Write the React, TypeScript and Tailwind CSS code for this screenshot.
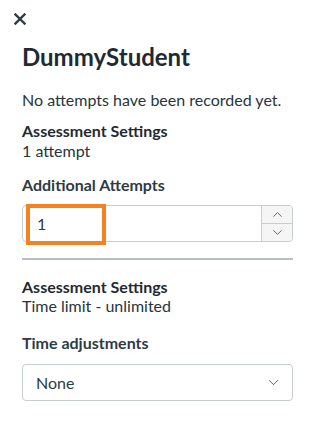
import { ChevronDown, ChevronUp } from "lucide-react";

export default function App() {
  return (
    <div
      className="w-[313px] h-[441px] bg-white text-[#2d3b45] overflow-hidden"
      style={{ fontFamily: "Lato, 'Noto Sans', sans-serif" }}
    >
      {/* Close */}
      <div className="pt-[13px] pl-[14px]">
        <svg width="12" height="12" viewBox="0 0 12 12" className="block">
          <path d="M1.5 1.5 L10.5 10.5 M10.5 1.5 L1.5 10.5" stroke="#2d3b45" strokeWidth="2.4" strokeLinecap="square" />
        </svg>
      </div>

      <div className="pl-[22px] pr-[20px]">
        <h1 className="mt-[17px] text-[24px] leading-[30px] font-bold text-[#1f2a33]">DummyStudent</h1>

        <p className="mt-[18px] text-[16px] leading-[20px] text-[#273540]">No attempts have been recorded yet.</p>

        <div className="mt-[11px] text-[16px] leading-[20px] text-[#273540]">
          <div className="font-bold text-[#1f2a33]">Assessment Settings</div>
          <div>1 attempt</div>
        </div>

        <label className="block mt-[14px] text-[16px] leading-[20px] font-bold">Additional Attempts</label>

        {/* Number input */}
        <div className="relative mt-[10px] flex h-[37px] border border-[#c7cdd1] rounded-[4px]">
          <div className="flex-1 flex items-center pl-[14px] text-[16px]">1</div>
          <div className="w-[31px] flex flex-col border-l border-[#c7cdd1] bg-[#f5f5f5] rounded-r-[4px]">
            <div className="flex-1 flex items-center justify-center border-b border-[#c7cdd1]">
              <ChevronUp size={15} strokeWidth={1.2} color="#2d3b45" />
            </div>
            <div className="flex-1 flex items-center justify-center">
              <ChevronDown size={15} strokeWidth={1.2} color="#2d3b45" />
            </div>
          </div>
          <div className="absolute left-[3px] top-[-2px] w-[80px] h-[41px] border-[4px] border-[#f58220]" />
        </div>

        <div className="mt-[16px] h-[2px] bg-[#b8bfc4]" />

        <div className="mt-[17px] text-[16px] leading-[19px] text-[#273540]">
          <div className="font-bold text-[#1f2a33]">Assessment Settings</div>
          <div>Time limit - unlimited</div>
        </div>

        <label className="block mt-[18px] text-[16px] leading-[20px] font-bold">Time adjustments</label>

        {/* Select */}
        <div className="mt-[11px] flex items-center justify-between h-[37px] border border-[#c7cdd1] rounded-[4px] pl-[13px] pr-[10px]">
          <span className="text-[16px]">None</span>
          <ChevronDown size={17} strokeWidth={1.1} color="#2d3b45" />
        </div>
      </div>
    </div>
  );
}
